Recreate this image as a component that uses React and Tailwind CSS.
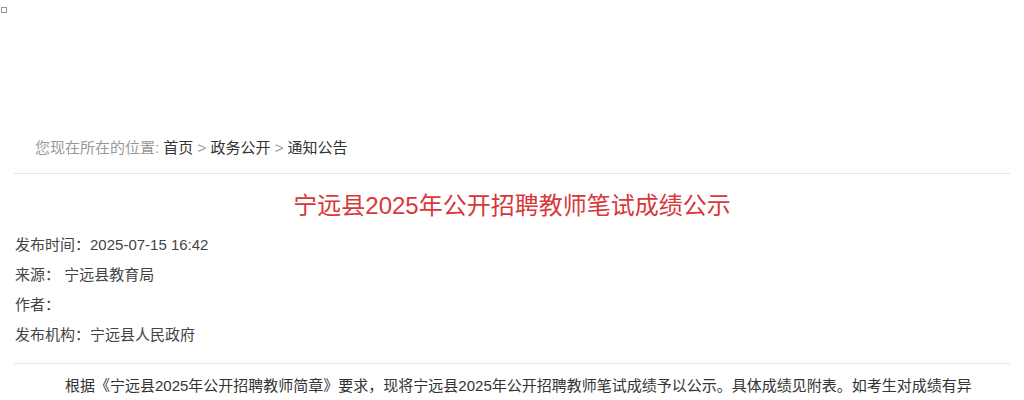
export default function App() {
  const meta = [
    { label: "发布时间：", value: "2025-07-15 16:42" },
    { label: "来源：", value: "\u00a0宁远县教育局" },
    { label: "作者：", value: "" },
    { label: "发布机构：", value: "宁远县人民政府" },
  ];

  return (
    <div
      className="min-h-[400px] bg-white text-[#333]"
      style={{ fontFamily: '"Liberation Sans", "Noto Sans CJK SC", sans-serif' }}
    >
      {/* 顶部（图片未加载） */}
      <div className="h-[130px]">
        <div className="ml-[1px] pt-[7px]">
          <div className="h-[6px] w-[6px] border border-[#999]" />
        </div>
      </div>

      <div className="mx-auto w-[996px]">
        {/* 位置 */}
        <div className="border-b border-[#e6e6e6] pb-[7px] pl-[21px] text-[15px] leading-[36px]">
          <span className="text-[#999]">您现在所在的位置: </span>
          <a className="text-[#333]">首页</a>
          <span className="text-[#999]"> &gt; </span>
          <a className="text-[#333]">政务公开</a>
          <span className="text-[#999]"> &gt; </span>
          <a className="text-[#333]">通知公告</a>
        </div>

        {/* 标题 */}
        <h1 className="pt-[8px] text-center text-[24px] leading-[48px] font-normal text-[#d8383a]">
          宁远县2025年公开招聘教师笔试成绩公示
        </h1>

        {/* 信息 */}
        <div className="pl-[1px] text-[15px] leading-[30px] text-[#444]">
          {meta.map((m) => (
            <div key={m.label}>
              {m.label}
              {m.value}
            </div>
          ))}
        </div>

        <div className="mt-[13px] border-t border-[#e6e6e6]" />

        {/* 正文 */}
        <div className="px-[21px] pt-[7px] text-[15px] leading-[30px] text-[#333]">
          <p className="indent-[2em]">
            根据《宁远县2025年公开招聘教师简章》要求，现将宁远县2025年公开招聘教师笔试成绩予以公示。具体成绩见附表。如考生对成绩有异议，请于公示期内向宁远县教育局反映。
          </p>
        </div>
      </div>
    </div>
  );
}
